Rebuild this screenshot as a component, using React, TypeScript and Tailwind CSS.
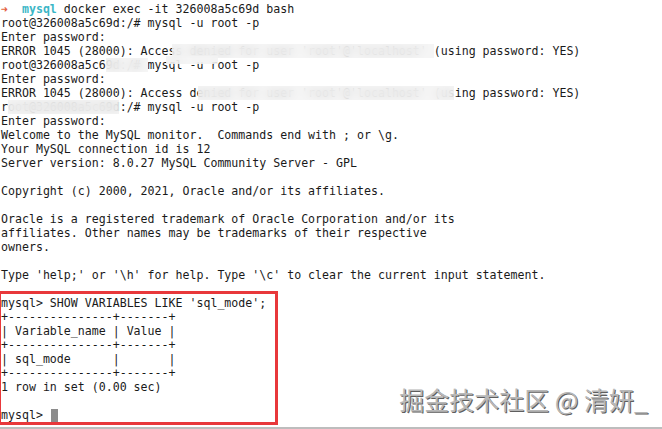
import React from "react";

const head: React.ReactNode[] = [
  <>
    <span className="text-[#e4633f]">➜</span>{"  "}
    <span className="font-bold text-[#3bb6c6]">mysql</span> docker exec -it 326008a5c69d bash
  </>,
  "root@326008a5c69d:/# mysql -u root -p",
  "Enter password:",
  "ERROR 1045 (28000): Access denied for user 'root'@'localhost' (using password: YES)",
  "root@326008a5c69d:/# mysql -u root -p",
  "Enter password:",
  "ERROR 1045 (28000): Access denied for user 'root'@'localhost' (using password: YES)",
  "root@326008a5c69d:/# mysql -u root -p",
  "Enter password:",
  "Welcome to the MySQL monitor.  Commands end with ; or \\g.",
  "Your MySQL connection id is 12",
  "Server version: 8.0.27 MySQL Community Server - GPL",
  "",
  "Copyright (c) 2000, 2021, Oracle and/or its affiliates.",
  "",
  "Oracle is a registered trademark of Oracle Corporation and/or its",
  "affiliates. Other names may be trademarks of their respective",
  "owners.",
  "",
  "Type 'help;' or '\\h' for help. Type '\\c' to clear the current input statement.",
  "",
];

const query = [
  "mysql> SHOW VARIABLES LIKE 'sql_mode';",
  "+---------------+-------+",
  "| Variable_name | Value |",
  "+---------------+-------+",
  "| sql_mode      |       |",
  "+---------------+-------+",
  "1 row in set (0.00 sec)",
  "",
];

// mosaic patches hiding the user/host names
const patches = [
  { l: 172, t: 44, w: 262, h: 14 },
  { l: 166, t: 56, w: 52, h: 8 },
  { l: 106, t: 58, w: 42, h: 14 },
  { l: 198, t: 86, w: 256, h: 14 },
  { l: 8, t: 100, w: 111, h: 14 },
];

export default function App() {
  return (
    <div className="relative h-[429px] w-[662px] overflow-hidden border-b-2 border-[#bdbdbd] bg-white">
      <div className="whitespace-pre pl-[1px] pt-[2px] font-['DejaVu_Sans_Mono',monospace] text-[11.6px] leading-[14px] text-[#1a1a1a]">
        {head.map((l, i) => (
          <div key={i} className="h-[14px]">
            {l}
          </div>
        ))}
        <div className="-ml-[3px] -mt-[5px] w-[280px] border-[3px] border-[#e8383b] pt-[2px]">
          {query.map((l, i) => (
            <div key={i} className="h-[14px]">
              {l}
            </div>
          ))}
          <div className="flex h-[14px] items-center">
            mysql&gt; <span className="ml-[1px] inline-block h-[13px] w-[7px] bg-[#8c8c8c]" />
          </div>
        </div>
      </div>

      {patches.map((p, i) => (
        <div
          key={i}
          className="absolute bg-[#f2f2f2]/80 backdrop-blur-[4px]"
          style={{ left: p.l, top: p.t, width: p.w, height: p.h }}
        />
      ))}

      <div className="absolute right-[14px] top-[382px] font-['Noto_Sans_CJK_SC',sans-serif] text-[25px] leading-[34px] text-[#b8b8b8] [text-shadow:1px_1px_0_#5e5e5e]">
        掘金技术社区 @ 清妍_
      </div>
    </div>
  );
}
